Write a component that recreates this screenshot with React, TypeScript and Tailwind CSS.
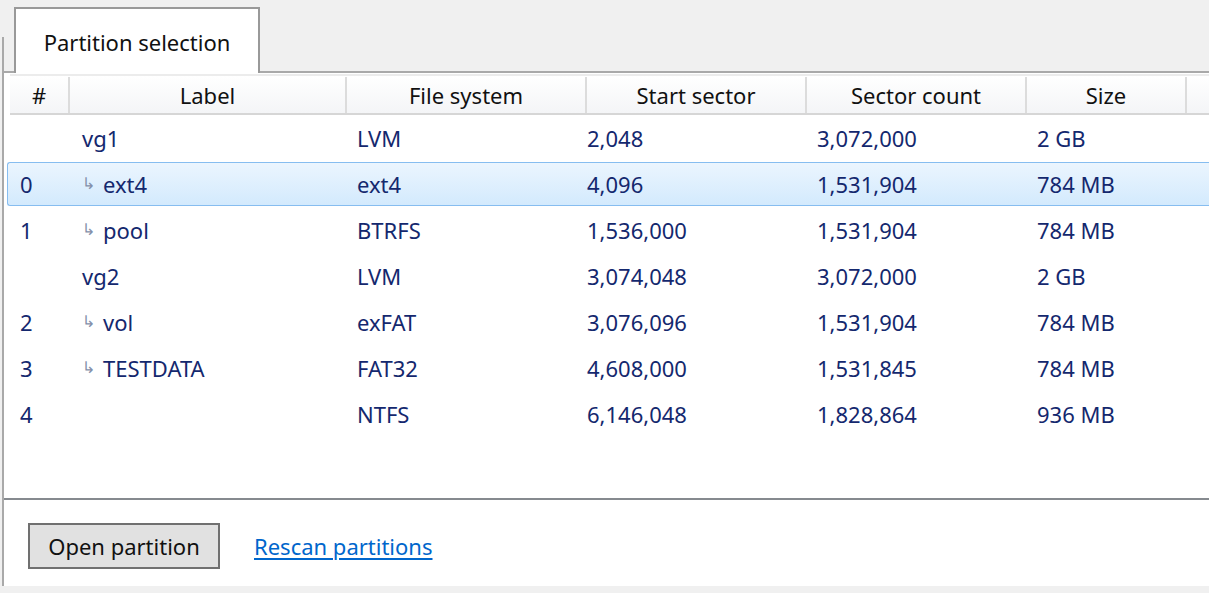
import React from "react";

type Row = {
  num: string;
  label: string;
  child?: boolean;
  fs: string;
  start: string;
  count: string;
  size: string;
  selected?: boolean;
};

const rows: Row[] = [
  { num: "", label: "vg1", fs: "LVM", start: "2,048", count: "3,072,000", size: "2 GB" },
  { num: "0", label: "ext4", child: true, fs: "ext4", start: "4,096", count: "1,531,904", size: "784 MB", selected: true },
  { num: "1", label: "pool", child: true, fs: "BTRFS", start: "1,536,000", count: "1,531,904", size: "784 MB" },
  { num: "", label: "vg2", fs: "LVM", start: "3,074,048", count: "3,072,000", size: "2 GB" },
  { num: "2", label: "vol", child: true, fs: "exFAT", start: "3,076,096", count: "1,531,904", size: "784 MB" },
  { num: "3", label: "TESTDATA", child: true, fs: "FAT32", start: "4,608,000", count: "1,531,845", size: "784 MB" },
  { num: "4", label: "", fs: "NTFS", start: "6,146,048", count: "1,828,864", size: "936 MB" },
];

const headers = [
  { label: "#", w: "w-[60px]" },
  { label: "Label", w: "w-[277px]" },
  { label: "File system", w: "w-[240px]" },
  { label: "Start sector", w: "w-[220px]" },
  { label: "Sector count", w: "w-[220px]" },
  { label: "Size", w: "w-[160px]" },
];

export default function App() {
  return (
    <div
      className="w-[1209px] h-[593px] bg-[#f0f0f0] flex flex-col overflow-hidden text-[22px]"
      style={{ fontFamily: "'Noto Sans', 'Open Sans', sans-serif" }}
    >
      {/* Tab strip */}
      <div className="flex h-[71px] shrink-0">
        <div className="w-[2px] ml-[2px] mt-[37px] bg-[#a9a9a9]" />
        <div className="ml-[10px] mt-[7px] relative z-10 h-[66px] w-[246px] border-2 border-b-0 border-[#999999] bg-white flex items-center justify-center pt-[3px] text-[#111]">
          Partition selection
        </div>
      </div>

      {/* Panel */}
      <div className="ml-[2px] h-[515px] shrink-0 border-t-2 border-l-2 border-[#a9a9a9] bg-white flex flex-col">
        {/* Table */}
        <div className="h-[425px] shrink-0 flex flex-col pt-[1px]">
          <div className="ml-[6px] flex h-[41px] border-t-2 border-b-2 border-t-[#ececec] border-b-[#d6d6d6] bg-gradient-to-b from-white to-[#f4f5f7] text-[#111] pt-[1px]">
            {headers.map((h) => (
              <div
                key={h.label}
                className={`${h.w} shrink-0 border-r-2 border-[#dcdcdc] flex items-center justify-center`}
              >
                {h.label}
              </div>
            ))}
            <div className="flex-1" />
          </div>

          <div className="flex flex-col text-[#14286e]">
            {rows.map((r, i) => (
              <div
                key={i}
                className={
                  r.selected
                    ? "ml-[3px] h-[44px] my-[1px] flex items-center border border-r-0 border-[#86bdf0] rounded-l-[3px] bg-gradient-to-b from-[#ebf5fe] to-[#d3eafd]"
                    : "ml-[4px] h-[46px] flex items-center"
                }
              >
                <div className="w-[64px] shrink-0 pl-[12px]">{r.num}</div>
                <div className="w-[275px] shrink-0 pl-[10px] flex items-center">
                  {r.child && (
                    <span className="text-[16px] text-[#8490aa] w-[21px] -mt-[2px]">↳</span>
                  )}
                  <span>{r.label}</span>
                </div>
                <div className="w-[240px] shrink-0 pl-[10px]">{r.fs}</div>
                <div className="w-[220px] shrink-0">{r.start}</div>
                <div className="w-[220px] shrink-0 pl-[10px]">{r.count}</div>
                <div className="w-[160px] shrink-0 pl-[10px]">{r.size}</div>
              </div>
            ))}
          </div>
        </div>

        {/* Separator */}
        <div className="h-[2px] bg-[#868a8f] shrink-0" />

        {/* Bottom actions */}
        <div className="flex-1 flex items-center gap-[34px] pl-[24px] pt-[6px]">
          <button className="h-[46px] w-[192px] border-2 border-[#707070] bg-[#e1e1e1] text-[#111] flex items-center justify-center">
            Open partition
          </button>
          <a href="#" className="text-[#0066cc] underline underline-offset-[3px]">
            Rescan partitions
          </a>
        </div>
      </div>
    </div>
  );
}
